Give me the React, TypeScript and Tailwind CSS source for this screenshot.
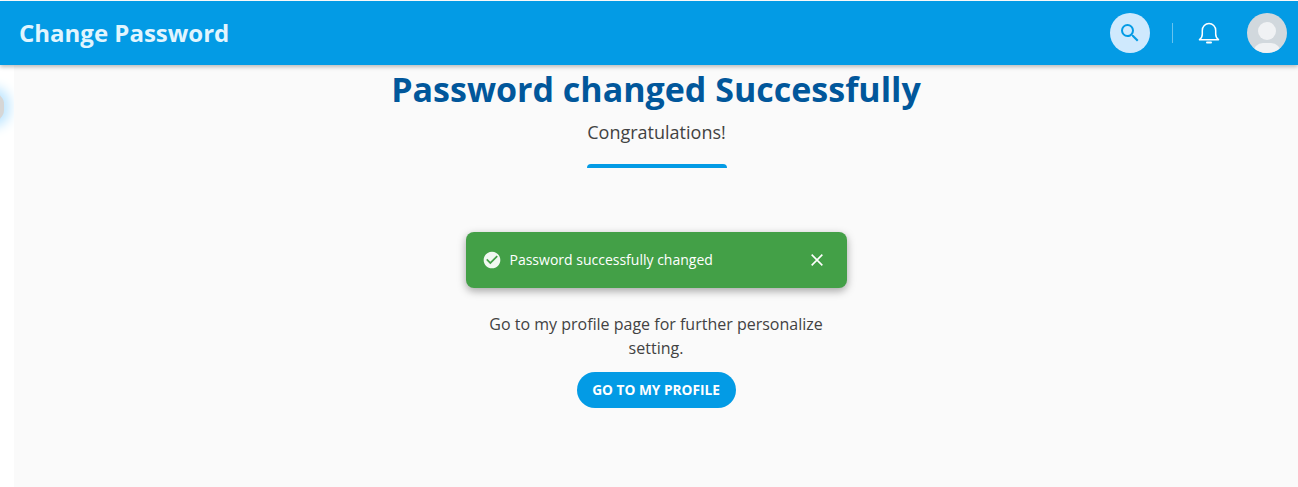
const openSans = { fontFamily: '"Open Sans", sans-serif' };

function SearchIcon() {
  return (
    <svg viewBox="0 0 24 24" className="w-6 h-6" fill="#039be5">
      <path d="M15.5 14h-.79l-.28-.27A6.47 6.47 0 0 0 16 9.5 6.5 6.5 0 1 0 9.5 16c1.61 0 3.09-.59 4.23-1.57l.27.28v.79l5 4.99L20.49 19l-4.99-5zm-6 0C7.01 14 5 11.99 5 9.5S7.01 5 9.5 5 14 7.01 14 9.5 11.99 14 9.5 14z" />
    </svg>
  );
}

function BellIcon() {
  return (
    <svg viewBox="0 0 24 24" className="w-6 h-6" fill="none" stroke="#fff" strokeWidth="1.5">
      <path d="M2.5 18.7h19c-1.8-1.3-2.8-3-2.8-5.7V9.5a6.7 7 0 0 0-13.4 0V13c0 2.7-1 4.4-2.8 5.7z" strokeLinejoin="round" />
      <path d="M10 21.4h4" strokeLinecap="round" strokeWidth="2" />
    </svg>
  );
}

function Avatar() {
  return (
    <div className="relative w-10 h-10 rounded-full bg-[#d1d8dd] overflow-hidden">
      <div className="absolute left-[11px] top-[9px] w-[18px] h-[18px] rounded-full bg-[#f0f2f4]" />
      <div className="absolute left-[6px] top-[30px] w-[28px] h-[20px] rounded-full bg-[#f0f2f4]" />
    </div>
  );
}

function Header() {
  return (
    <header className="relative z-10 h-[64px] bg-[#039be5] flex items-center pl-[19px] pr-[11px] shadow-[0_2px_4px_rgba(0,0,0,0.25)]">
      <h1 className="flex-1 text-[24px] font-bold text-[#e1f5fe]">Change Password</h1>
      <button type="button" className="w-10 h-10 rounded-full bg-[#cfe9fd] flex items-center justify-center">
        <SearchIcon />
      </button>
      <div className="w-px h-5 bg-white/40 ml-[22px] mr-[24px]" />
      <BellIcon />
      <div className="ml-[26px]">
        <Avatar />
      </div>
    </header>
  );
}

function Toast() {
  return (
    <div className="w-[381px] h-[56px] mt-[64px] rounded-lg bg-[#43a047] flex items-center pl-[16px] pr-[22px] shadow-[0_3px_8px_rgba(0,0,0,0.35)]">
      <svg viewBox="0 0 24 24" className="w-5 h-5 mr-[8px]" fill="#f1f8f1">
        <path d="M12 2C6.48 2 2 6.48 2 12s4.48 10 10 10 10-4.48 10-10S17.52 2 12 2zm-2 15-5-5 1.41-1.41L10 14.17l7.59-7.59L19 8l-9 9z" />
      </svg>
      <span className="flex-1 text-[14px] leading-[20px] text-white">Password successfully changed</span>
      <svg viewBox="0 0 24 24" className="w-4 h-4" fill="none" stroke="#fff" strokeWidth="2.4">
        <path d="M4 4l16 16M20 4L4 20" />
      </svg>
    </div>
  );
}

export default function App() {
  return (
    <div className="w-[1298px] h-[487px] overflow-hidden bg-white flex flex-col pt-px" style={openSans}>
      <Header />
      <div className="flex flex-1 min-h-0">
        <aside className="relative w-[14px] bg-white overflow-hidden">
          <div className="absolute left-[-18px] top-[28px] w-[22px] h-[28px] rounded-full bg-[#d6d6d6] shadow-[0_0_12px_6px_#bfe6ff]" />
        </aside>
        <main className="flex-1 bg-[#fafafa] flex flex-col items-center">
          <h2 className="text-[34px] leading-[46px] font-bold text-[#01579b] mt-[1px]">Password changed Successfully</h2>
          <p className="text-[18px] leading-[24px] text-[#424242] mt-[8px] ml-px">Congratulations!</p>
          <div className="w-[140px] h-1 rounded-t bg-[#039be5] mt-[20px] ml-px" />
          <Toast />
          <p className="w-[350px] text-center text-[16px] leading-[24px] text-[#424242] mt-[24px]">
            Go to my profile page for further personalize setting.
          </p>
          <button
            type="button"
            className="w-[159px] h-[36px] mt-[12px] rounded-full bg-[#039be5] text-white text-[13.7px] font-bold"
          >
            GO TO MY PROFILE
          </button>
        </main>
      </div>
    </div>
  );
}
